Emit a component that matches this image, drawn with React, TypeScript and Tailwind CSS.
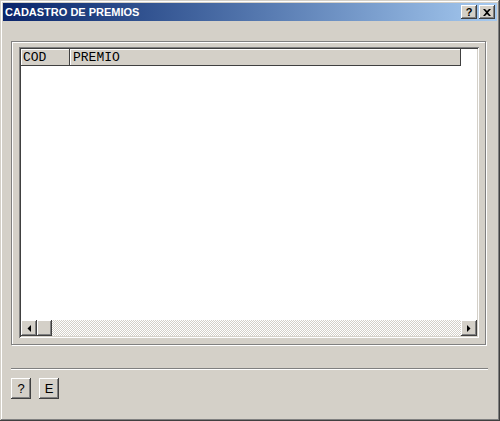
const raised =
	'shadow-[inset_-1px_-1px_#404040,inset_1px_1px_#ffffff,inset_-2px_-2px_#808080,inset_2px_2px_#d4d0c8]'

function TitleButton({ children }: { children: React.ReactNode }) {
	return (
		<div
			className={`w-[16px] h-[14px] bg-[#d4d0c8] ${raised} flex items-center justify-center`}
		>
			{children}
		</div>
	)
}

function ArrowButton({ dir }: { dir: 'left' | 'right' }) {
	return (
		<div
			className={`w-[16px] h-[16px] bg-[#d4d0c8] ${raised} flex items-center justify-center`}
		>
			<svg width="4" height="7" viewBox="0 0 4 7">
				{dir === 'left' ? (
					<polygon points="4,0 4,7 0.5,3.5" fill="#000" />
				) : (
					<polygon points="0,0 0,7 3.5,3.5" fill="#000" />
				)}
			</svg>
		</div>
	)
}

function DialogButton({ label }: { label: string }) {
	return (
		<button
			className={`w-[20px] h-[21px] bg-[#d4d0c8] ${raised} flex items-center justify-center text-[13px] text-black font-['Liberation_Sans',sans-serif]`}
		>
			{label}
		</button>
	)
}

export default function App() {
	return (
		<div className="w-[500px] h-[421px] bg-[#d4d0c8] p-[3px] flex flex-col shadow-[inset_-1px_-1px_#404040,inset_1px_1px_#d4d0c8,inset_-2px_-2px_#808080,inset_2px_2px_#ffffff]">
			<div className="h-[18px] flex items-center justify-between pl-[2px] pr-[2px] bg-linear-to-r from-[#0a246a] to-[#a6caf0]">
				<span className="text-white font-bold text-[11px] leading-none font-['Liberation_Sans',sans-serif]">
					CADASTRO DE PREMIOS
				</span>
				<div className="flex items-center gap-[2px]">
					<TitleButton>
						<span className="text-[11px] font-bold leading-none text-black font-['Liberation_Sans',sans-serif]">
							?
						</span>
					</TitleButton>
					<TitleButton>
						<svg width="8" height="7" viewBox="0 0 8 7">
							<path
								d="M0 0h2l2 2 2-2h2L5 3.5 8 7H6L4 5 2 7H0l3-3.5z"
								fill="#000"
							/>
						</svg>
					</TitleButton>
				</div>
			</div>

			<div className="flex-1 px-[8px] pt-[20px]">
				<div className="w-[475px] h-[304px] border border-[#808080] shadow-[inset_1px_1px_#ffffff,1px_1px_#ffffff] pt-[5px] pl-[7px]">
					<div className="w-[460px] h-[291px] bg-white p-[2px] flex flex-col shadow-[inset_1px_1px_#808080,inset_-1px_-1px_#ffffff,inset_2px_2px_#404040,inset_-2px_-2px_#d4d0c8]">
						<div className="h-[17px] flex font-['Liberation_Mono',monospace] text-[13px] leading-none text-black">
							<div className="w-[49px] bg-[#d4d0c8] shadow-[inset_-1px_-1px_#404040,inset_1px_1px_#ffffff] flex items-center pl-[2px]">
								COD
							</div>
							<div className="w-[391px] bg-[#d4d0c8] shadow-[inset_-1px_-1px_#404040,inset_1px_1px_#ffffff] flex items-center pl-[3px]">
								PREMIO
							</div>
						</div>
						<div className="flex-1 bg-white"></div>
						<div className="h-[16px] flex">
							<ArrowButton dir="left" />
							<div className={`w-[15px] h-[16px] bg-[#d4d0c8] ${raised}`}></div>
							<div className="flex-1 bg-[repeating-conic-gradient(#d4d0c8_0_25%,#ffffff_0_50%)] bg-[length:2px_2px]"></div>
							<ArrowButton dir="right" />
						</div>
					</div>
				</div>

				<div className="w-[477px] mt-[23px] border-t border-t-[#808080] border-b border-b-white"></div>

				<div className="flex gap-[8px] mt-[8px]">
					<DialogButton label="?" />
					<DialogButton label="E" />
				</div>
			</div>
		</div>
	)
}
